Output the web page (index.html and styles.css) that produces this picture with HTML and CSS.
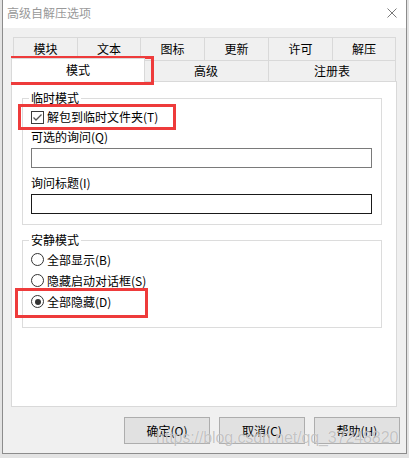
FILE: index.html
```html
<!DOCTYPE html>
<html lang="zh-CN">
<head>
<meta charset="utf-8">
<title>高级自解压选项</title>
<link rel="stylesheet" href="styles.css">
</head>
<body>
<div class="screen">
  <div class="window">
    <div class="titlebar">
      <span class="title">高级自解压选项</span>
      <svg class="close" width="10" height="10" viewBox="0 0 10 10"><path d="M0.5 0.5L9.5 9.5M9.5 0.5L0.5 9.5" stroke="#7a7a7a" stroke-width="1" fill="none"/></svg>
    </div>
    <div class="client">
      <div class="tabs">
        <div class="row row1">
          <div class="tab">模块</div>
          <div class="tab">文本</div>
          <div class="tab">图标</div>
          <div class="tab">更新</div>
          <div class="tab">许可</div>
          <div class="tab last">解压</div>
        </div>
        <div class="row row2">
          <div class="tab selected">模式</div>
          <div class="tab">高级</div>
          <div class="tab last">注册表</div>
        </div>
      </div>
      <div class="panel">
        <fieldset class="group g1">
          <legend>临时模式</legend>
          <div class="check-row">
            <svg class="checkbox" width="13" height="13" viewBox="0 0 13 13"><rect x="0.5" y="0.5" width="12" height="12" fill="#fff" stroke="#3c3c3c"/><path d="M2.5 6.5L5 9L10.5 3.5" stroke="#555" stroke-width="1.3" fill="none"/></svg>
            <span>解包到临时文件夹(T)</span>
          </div>
          <div class="label lq">可选的询问(Q)</div>
          <div class="textbox"></div>
          <div class="label li">询问标题(I)</div>
          <div class="textbox focused"></div>
        </fieldset>
        <fieldset class="group g2">
          <legend>安静模式</legend>
          <div class="radio-row"><span class="radio"></span><span>全部显示(B)</span></div>
          <div class="radio-row"><span class="radio"></span><span>隐藏启动对话框(S)</span></div>
          <div class="radio-row"><span class="radio on"></span><span>全部隐藏(D)</span></div>
        </fieldset>
      </div>
      <div class="buttons">
        <button class="btn">确定(O)</button>
        <button class="btn">取消(C)</button>
        <button class="btn">帮助(H)</button>
      </div>
    </div>
  </div>
  <div class="mark mark-tab"></div>
  <div class="mark mark-check"></div>
  <div class="mark mark-radio"></div>
  <div class="watermark">https://blog.csdn.net/qq_37248820</div>
</div>
</body>
</html>
```
FILE: styles.css
```css
html, body {
  margin: 0;
  padding: 0;
}
body {
  background: #e3e3e3;
  font-family: "Noto Sans CJK SC", "Noto Sans", sans-serif;
  font-size: 12px;
  color: #000;
  overflow: hidden;
}
.screen {
  position: relative;
  width: 409px;
  height: 458px;
}
.window {
  margin-left: 2px;
  width: 405px;
  height: 454px;
  box-sizing: border-box;
  border: 1px solid #8c8c8c;
  border-top: none;
  background: #f0f0f0;
  display: flex;
  flex-direction: column;
}
.titlebar {
  height: 28px;
  flex: none;
  background: #fff;
  display: flex;
  align-items: center;
  justify-content: space-between;
  padding: 0 9px 2px 4px;
  box-sizing: border-box;
}
.title {
  color: #999;
  font-size: 12px;
  line-height: 16px;
}
.close {
  display: block;
}
.client {
  padding: 9px 0 0 8px;
  display: flex;
  flex-direction: column;
}
.tabs {
  margin-left: 2px;
  width: 383px;
}
.row {
  display: grid;
}
.row1 {
  grid-template-columns: 64px 63px 64px 64px 64px 64px;
  height: 23px;
}
.row2 {
  grid-template-columns: 130px 125px 128px;
  height: 21px;
}
.tab {
  border-top: 1px solid #d9d9d9;
  border-left: 1px solid #d9d9d9;
  display: flex;
  align-items: center;
  justify-content: center;
  line-height: 16px;
  background: #f0f0f0;
}
.tab.last {
  border-right: 1px solid #d9d9d9;
}
.tab.selected {
  position: relative;
  z-index: 1;
  margin: -2px -2px -1px -2px;
  border: 1px solid #d9d9d9;
  border-bottom: none;
  background: #fff;
  padding-bottom: 1px;
}
.panel {
  width: 386px;
  height: 326px;
  box-sizing: border-box;
  border: 1px solid #d9d9d9;
  background: #fff;
  padding: 0 0 0 10px;
}
.group {
  width: 360px;
  box-sizing: border-box;
  border: 1px solid #dcdcdc;
  margin: 0;
  padding: 0 9px 0 8px;
  min-width: 0;
}
.group legend {
  padding: 0 2px;
  margin-left: -2px;
  line-height: 16px;
  font-size: 12px;
}
.g1 {
  margin-top: 8px;
  padding-top: 3px;
  padding-bottom: 10px;
}
.g2 {
  margin-top: 7px;
  padding-top: 1px;
  padding-bottom: 15px;
}
.check-row {
  height: 16px;
  display: flex;
  align-items: center;
  line-height: 16px;
}
.checkbox {
  display: block;
  margin-right: 3px;
  flex: none;
}
.label {
  line-height: 16px;
  height: 16px;
}
.lq {
  margin-top: 4px;
}
.li {
  margin-top: 7px;
}
.textbox {
  margin-top: 3px;
  height: 20px;
  box-sizing: border-box;
  border: 1px solid #7a7a7a;
  background: #fff;
}
.textbox.focused {
  border-color: #1a1a1a;
}
.radio-row {
  height: 21px;
  display: flex;
  align-items: center;
  line-height: 16px;
}
.radio {
  width: 13px;
  height: 13px;
  box-sizing: border-box;
  border: 1px solid #333;
  border-radius: 50%;
  background: #fff;
  margin-right: 3px;
  flex: none;
  display: flex;
  align-items: center;
  justify-content: center;
}
.radio.on::after {
  content: "";
  width: 6px;
  height: 6px;
  border-radius: 50%;
  background: #333;
}
.buttons {
  display: flex;
  justify-content: flex-end;
  gap: 9px;
  margin-top: 10px;
  padding-right: 6px;
}
.btn {
  width: 86px;
  height: 27px;
  box-sizing: border-box;
  border: 1px solid #adadad;
  background: #e1e1e1;
  font-family: "Noto Sans CJK SC", "Noto Sans", sans-serif;
  font-size: 12px;
  color: #000;
  padding: 0;
  margin: 0;
  line-height: 16px;
}
.mark {
  position: absolute;
  box-sizing: border-box;
  border: 3px solid #ee3b3b;
}
.mark-tab {
  left: 11px;
  top: 56px;
  width: 143px;
  height: 29px;
}
.mark-check {
  left: 18px;
  top: 104px;
  width: 158px;
  height: 26px;
}
.mark-radio {
  left: 15px;
  top: 288px;
  width: 133px;
  height: 30px;
}
.watermark {
  position: absolute;
  left: 156px;
  top: 428px;
  font-family: "Liberation Sans", Arial, sans-serif;
  font-size: 16px;
  line-height: 20px;
  letter-spacing: -0.1px;
  color: rgba(150, 150, 150, 0.55);
  text-shadow: 0 0 1px rgba(255, 255, 255, 0.9);
  white-space: nowrap;
}
```
